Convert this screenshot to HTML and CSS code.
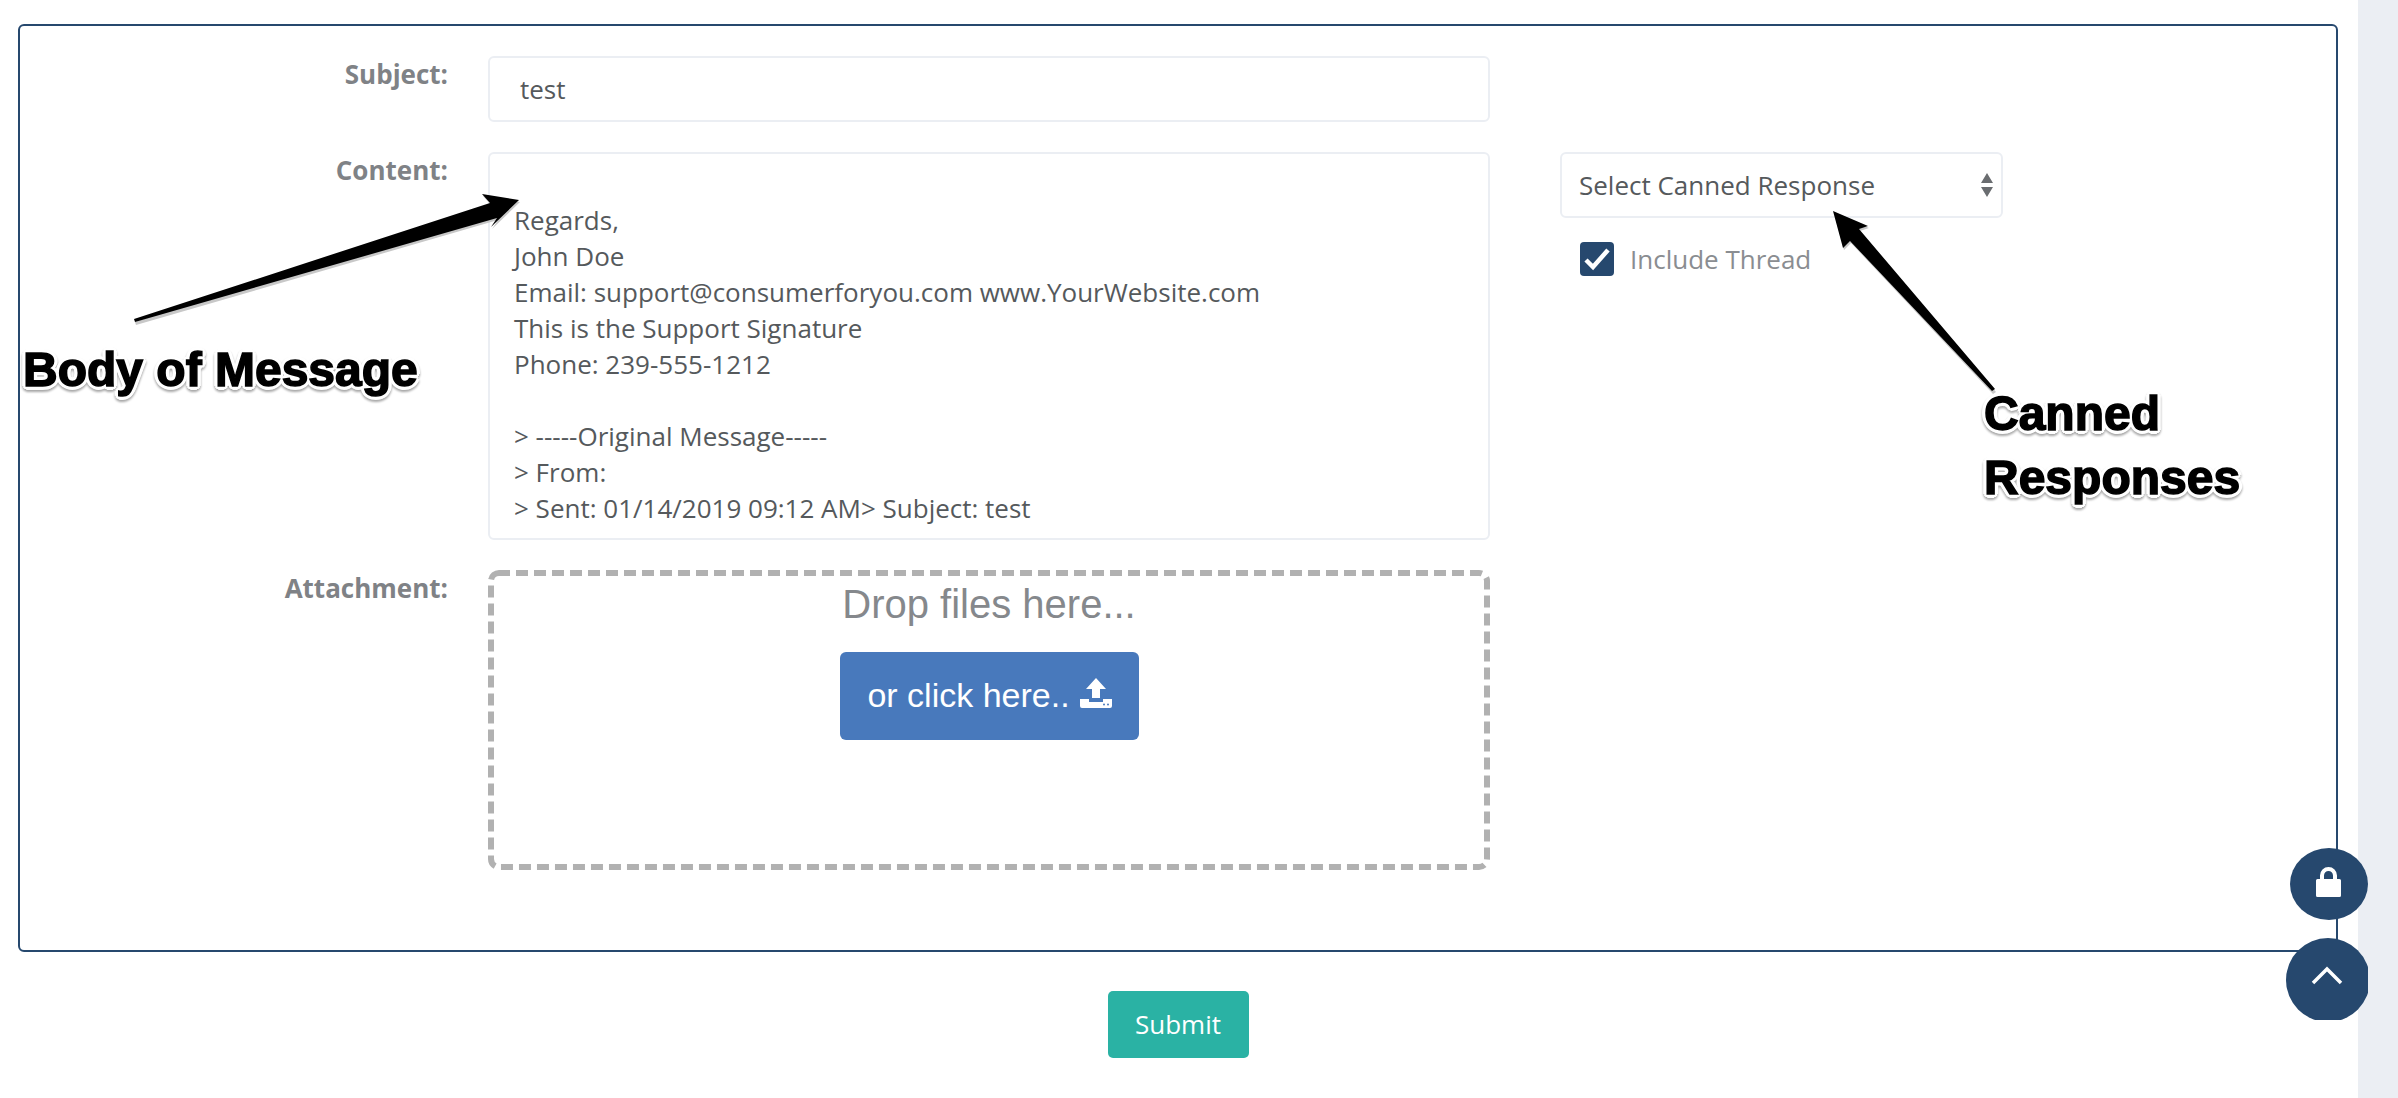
FILE: index.html
```html
<!DOCTYPE html>
<html lang="en">
<head>
<meta charset="utf-8">
<title>Reply form</title>
<link rel="stylesheet" href="styles.css">
</head>
<body>
<div class="page">
  <main class="main">
    <section class="panel">
      <div class="row row-subject">
        <div class="label">Subject:</div>
        <div class="input">test</div>
      </div>
      <div class="row row-content">
        <div class="label">Content:</div>
        <div class="textarea">
          <div>Regards,</div>
          <div>John Doe</div>
          <div>Email: support@consumerforyou.com www.YourWebsite.com</div>
          <div>This is the Support Signature</div>
          <div>Phone: 239-555-1212</div>
          <div class="blank">&nbsp;</div>
          <div>&gt; -----Original Message-----</div>
          <div>&gt; From:</div>
          <div>&gt; Sent: 01/14/2019 09:12 AM&gt; Subject: test</div>
        </div>
        <div class="side">
          <div class="select">
            <span>Select Canned Response</span>
            <svg class="select-arrows" viewBox="0 0 12 24" width="12" height="24"><path d="M6 0 12 10H0Z M0 14H12L6 24Z" fill="#6a6d70"/></svg>
          </div>
          <div class="check-row">
            <span class="checkbox"><svg viewBox="0 0 34 34" width="34" height="34"><path d="M6 18 13 25 28 8" fill="none" stroke="#fff" stroke-width="4.5"/></svg></span>
            <span class="check-text">Include Thread</span>
          </div>
        </div>
      </div>
      <div class="row row-attach">
        <div class="label">Attachment:</div>
        <div class="dropzone">
          <svg class="dash-frame" viewBox="0 0 1002 300" width="1002" height="300"><rect x="3" y="3" width="996" height="294" rx="8" ry="8"/></svg>
          <div class="drop-text">Drop files here...</div>
          <div class="upload-btn">
            <span>or click here..</span>
            <svg viewBox="0 0 32 30" width="32" height="30"><path d="M16 0 26 11H20V20H12V11H6Z M0 21H9V24H23V21H32V28Q32 30 30 30H2Q0 30 0 28Z" fill="#fff"/><circle cx="24" cy="26.5" r="1" fill="#4879bc"/><circle cx="28" cy="26.5" r="1" fill="#4879bc"/></svg>
          </div>
        </div>
      </div>
    </section>
    <div class="actions"><div class="submit">Submit</div></div>
  </main>
  <aside class="scrollbar"></aside>
</div>

<svg class="arrows" viewBox="0 0 2398 1098" width="2398" height="1098">
  <path class="arrow-shadow" d="M134 320 490 203 482 194 519 200 491 227 497 218 135 323Z"/>
  <path d="M134 319 490 203 482 194 519 200 491 227 497 218 135 322Z"/>
  <path class="arrow-shadow" d="M1833 211 1868 226 1859 229 1995 390 1992 392 1850 241 1843 248Z"/>
  <path d="M1833 211 1868 226 1859 229 1995 389 1992 391 1850 241 1843 248Z"/>
</svg>
<div class="note note-body">Body of Message</div>
<div class="note note-canned">Canned<br>Responses</div>

<div class="fab fab-lock">
  <svg viewBox="0 0 25 31" width="25" height="31"><path d="M4 13V9.500A8.500 8.500 0 0 1 21 9.500V13H17V9.500A4.500 4.500 0 0 0 8 9.500V13Z M1.500 13H23.500Q25 13 25 14.500V29.500Q25 31 23.500 31H1.500Q0 31 0 29.500V14.500Q0 13 1.500 13Z" fill="#fff"/></svg>
</div>
<div class="fab-clip">
  <div class="fab-up">
    <svg viewBox="0 0 32 20" width="32" height="20"><path d="M2 18 16 4 30 18" fill="none" stroke="#fff" stroke-width="3.500"/></svg>
  </div>
</div>
</body>
</html>
```
FILE: styles.css
```css
* { box-sizing: border-box; }
html, body { margin: 0; padding: 0; height: 100%; background: #fff; overflow: hidden; }
body { font-family: "Open Sans", sans-serif; font-size: 26px; color: #55595c; }

.page { display: flex; width: 2398px; height: 1098px; }
.main { flex: 1; padding: 24px 20px 0 18px; }
.scrollbar { width: 40px; background: #ebeef3; }

.panel {
  height: 928px;
  border: 2px solid #26486e;
  border-radius: 6px;
  padding: 30px 0 0;
  display: flex;
  flex-direction: column;
}
.row { display: flex; align-items: flex-start; }
.row-subject { margin-bottom: 30px; }
.row-content { margin-bottom: 30px; }

.label {
  width: 428px;
  margin-right: 40px;
  padding-top: 1px;
  text-align: right;
  font-weight: 700;
  font-size: 26px;
  line-height: 34px;
  color: #7f8286;
}
.input, .textarea, .select {
  background: #fff;
  border: 2px solid #ebeef3;
  border-radius: 6px;
}
.input {
  width: 1002px;
  height: 66px;
  padding: 0 30px;
  line-height: 63px;
}
.textarea {
  width: 1002px;
  height: 388px;
  padding: 48px 24px 0;
  line-height: 36px;
  overflow: hidden;
}
.side { margin-left: 70px; width: 443px; }
.select {
  height: 66px;
  padding: 0 8px 0 17px;
  display: flex;
  align-items: center;
  justify-content: space-between;
}
.select-arrows { display: block; }
.check-row { display: flex; align-items: center; gap: 16px; margin: 24px 0 0 20px; }
.checkbox {
  display: block;
  width: 34px;
  height: 34px;
  border-radius: 4px;
  background: #26486e;
}
.checkbox svg { display: block; }
.check-text { color: #8a8d91; line-height: 34px; }

.dropzone {
  position: relative;
  width: 1002px;
  height: 300px;
  padding-top: 6px;
  display: flex;
  flex-direction: column;
  align-items: center;
  font-family: "Liberation Sans", Arial, sans-serif;
}
.dash-frame { position: absolute; left: 0; top: 0; }
.dash-frame rect {
  fill: none;
  stroke: #b1b1b1;
  stroke-width: 6;
  stroke-dasharray: 12 6;
  stroke-dashoffset: 1;
}
.drop-text { font-size: 40px; line-height: 46px; color: #85888c; margin-top: 5px; }
.upload-btn {
  width: 299px;
  height: 88px;
  margin: 25px 0 0 1px;
  padding-bottom: 2px;
  background: #4879bc;
  border-radius: 6px;
  color: #fff;
  font-size: 34px;
  display: flex;
  align-items: center;
  justify-content: center;
  gap: 10px;
}
.upload-btn svg { margin-bottom: 5px; }

.actions { display: flex; justify-content: center; margin-top: 39px; }
.submit {
  width: 141px;
  height: 67px;
  padding-bottom: 2px;
  background: #2ab2a4;
  border-radius: 5px;
  color: #fff;
  display: flex;
  align-items: center;
  justify-content: center;
}

.arrows { position: absolute; left: 0; top: 0; pointer-events: none; }
.arrows path { fill: #000; }
.arrows .arrow-shadow { fill: #c8c8c8; transform: translate(1px, 2px); }

.note {
  position: absolute;
  font-family: "Liberation Sans", Arial, sans-serif;
  font-weight: 700;
  font-size: 48px;
  line-height: 64px;
  color: #000;
  -webkit-text-stroke: 1.5px #000;
  text-shadow:
    -3px -2px 0 #fff, 3px -2px 0 #fff, -3px 2px 0 #fff, 3px 2px 0 #fff,
    -2px -3px 0 #fff, 2px -3px 0 #fff, -2px 3px 0 #fff, 2px 3px 0 #fff,
    0 -4px 0 #fff, 0 4px 0 #fff, -4px 0 0 #fff, 4px 0 0 #fff;
  filter: drop-shadow(0 2px 1px rgba(0, 0, 0, .35));
}
.note-body { left: 23px; top: 338px; }
.note-canned { left: 1984px; top: 382px; }

.fab {
  position: absolute;
  left: 2290px;
  top: 848px;
  width: 78px;
  height: 72px;
  border-radius: 50%;
  background: #26486e;
  display: flex;
  align-items: center;
  justify-content: center;
  padding: 0 2px 5px 0;
}
.fab svg, .fab-up svg { display: block; }
.fab-clip {
  position: absolute;
  left: 2286px;
  top: 938px;
  width: 82px;
  height: 82px;
  overflow: hidden;
}
.fab-up {
  width: 84px;
  height: 84px;
  border-radius: 50%;
  background: #26486e;
  display: flex;
  align-items: center;
  justify-content: center;
  padding: 0 2px 10px 0;
}
```
